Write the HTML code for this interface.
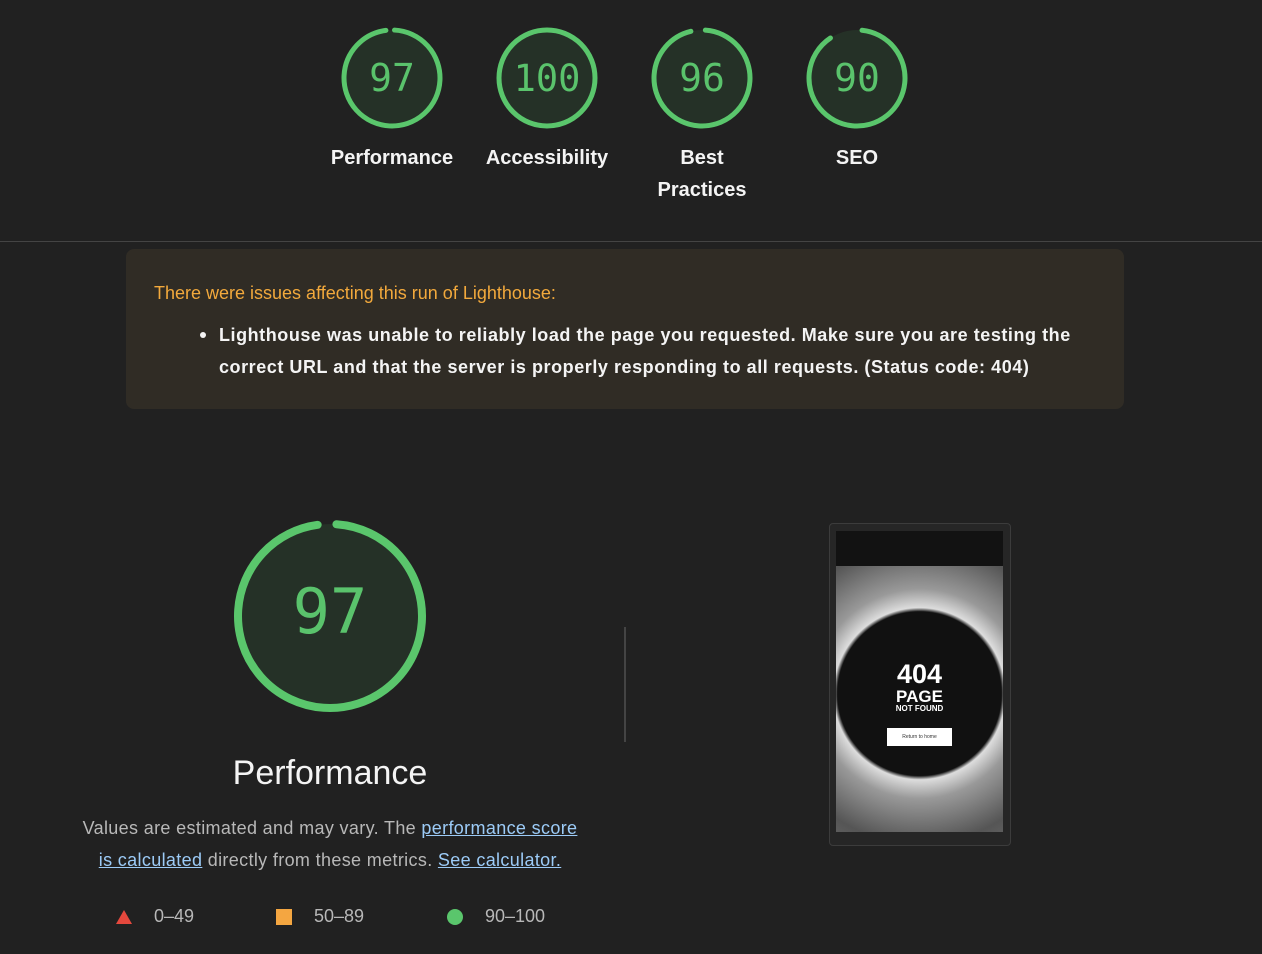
<!DOCTYPE html>
<html><head><meta charset="utf-8"><style>
body{margin:0;width:1262px;height:954px;background:#212121;font-family:"Liberation Sans",Arial,sans-serif;position:relative;overflow:hidden;color:#fff}
.g{position:absolute;width:110px;text-align:center}
.g svg{display:block;margin:0 auto}
.lbl{font-size:20px;font-weight:bold;color:#f4f4f4;line-height:32px;margin-top:12px}
.num{font-family:"DejaVu Sans Mono","Liberation Mono",monospace;fill:#5ac36c}
a{color:#9ccbf7;text-decoration:underline}
</style></head><body>

<div class="g" style="left:337px;top:26px;width:110px">
<svg width="104" height="104" viewBox="0 0 104 104"><circle cx="52" cy="52" r="48" fill="#253127"/><circle cx="52" cy="52" r="48" fill="none" stroke="#5ac66c" stroke-width="5" stroke-dasharray="292.5 301.6" transform="rotate(-87 52 52)" stroke-linecap="round"/><text x="52" y="65" text-anchor="middle" font-size="38" class="num">97</text></svg>
<div class="lbl" style="margin-left:-30px;margin-right:-30px">Performance</div></div>

<div class="g" style="left:492px;top:26px">
<svg width="104" height="104" viewBox="0 0 104 104"><circle cx="52" cy="52" r="48" fill="#253127" stroke="#5ac66c" stroke-width="5"/><text x="52" y="65" text-anchor="middle" font-size="37" class="num">100</text></svg>
<div class="lbl" style="margin-left:-30px;margin-right:-30px">Accessibility</div></div>

<div class="g" style="left:647px;top:26px">
<svg width="104" height="104" viewBox="0 0 104 104"><circle cx="52" cy="52" r="48" fill="#253127"/><circle cx="52" cy="52" r="48" fill="none" stroke="#5ac66c" stroke-width="5" stroke-dasharray="286.5 301.6" transform="rotate(-86 52 52)" stroke-linecap="round"/><text x="52" y="65" text-anchor="middle" font-size="38" class="num">96</text></svg>
<div class="lbl">Best<br>Practices</div></div>

<div class="g" style="left:802px;top:26px">
<svg width="104" height="104" viewBox="0 0 104 104"><circle cx="52" cy="52" r="48" fill="#253127"/><circle cx="52" cy="52" r="48" fill="none" stroke="#5ac66c" stroke-width="5" stroke-dasharray="268 301.6" transform="rotate(-84 52 52)" stroke-linecap="round"/><text x="52" y="65" text-anchor="middle" font-size="38" class="num">90</text></svg>
<div class="lbl">SEO</div></div>

<div style="position:absolute;left:0;right:0;top:241px;height:1px;background:#444"></div>

<div style="position:absolute;left:126px;top:249px;width:998px;height:160px;background:#302c25;border-radius:8px">
<div style="position:absolute;left:28px;top:34px;font-size:18px;color:#f2a93c">There were issues affecting this run of Lighthouse:</div>
<div style="position:absolute;left:93px;top:70px;width:880px;font-size:18px;font-weight:bold;line-height:32px;color:#f4f4f4;letter-spacing:0.55px;white-space:nowrap">Lighthouse was unable to reliably load the page you requested. Make sure you are testing the<br>correct URL and that the server is properly responding to all requests. (Status code: 404)</div>
<div style="position:absolute;left:74px;top:83px;width:6px;height:6px;border-radius:3px;background:#f4f4f4"></div>
</div>

<svg style="position:absolute;left:230px;top:516px" width="200" height="200" viewBox="0 0 200 200"><circle cx="100" cy="100" r="92" fill="#253127"/><circle cx="100" cy="100" r="92" fill="none" stroke="#5ac66c" stroke-width="8" stroke-dasharray="559 578" transform="rotate(-86 100 100)" stroke-linecap="round"/><text x="100" y="117" text-anchor="middle" font-size="62" class="num">97</text></svg>
<div style="position:absolute;left:130px;width:400px;top:754px;text-align:center;font-size:34px;color:#f4f4f4">Performance</div>
<div style="position:absolute;left:30px;width:600px;top:812px;text-align:center;font-size:18px;line-height:32px;color:#b8b8b8;letter-spacing:0.35px;white-space:nowrap">Values are estimated and may vary. The <a>performance score</a><br><a>is calculated</a> directly from these metrics. <a>See calculator.</a></div>

<div style="position:absolute;top:906px;left:116px;font-size:18px;color:#b8b8b8">
<span style="position:absolute;left:0;top:4px;width:0;height:0;border-left:8px solid transparent;border-right:8px solid transparent;border-bottom:14px solid #e5483d"></span>
<span style="position:absolute;left:38px;top:0;white-space:nowrap">0–49</span>
<span style="position:absolute;left:160px;top:3px;width:16px;height:16px;background:#f4a641"></span>
<span style="position:absolute;left:198px;top:0;white-space:nowrap">50–89</span>
<span style="position:absolute;left:331px;top:3px;width:16px;height:16px;border-radius:8px;background:#5ac66c"></span>
<span style="position:absolute;left:369px;top:0;white-space:nowrap">90–100</span>
</div>

<div style="position:absolute;left:624px;top:627px;width:2px;height:115px;background:#444"></div>

<div style="position:absolute;left:829px;top:523px;width:180px;height:321px;border:1px solid #3c3c3c;border-radius:4px;background:#262626">
<div style="position:absolute;left:6px;top:7px;width:167px;height:301px;background:#121212"></div>
<div style="position:absolute;left:6px;top:42px;width:167px;height:266px;background:radial-gradient(circle at 50% 48%,#111 0,#111 82px,#ddd 86px,#999 105px,#555 150px,#777 200px)"></div>
<div style="position:absolute;left:6px;top:137px;width:167px;text-align:center;font-weight:bold;color:#fff;line-height:1">
<div style="font-size:27px">404</div><div style="font-size:17px">PAGE</div><div style="font-size:8px">NOT FOUND</div></div>
<div style="position:absolute;left:57px;top:204px;width:65px;height:18px;background:#fff;color:#333;font-size:5px;text-align:center;line-height:18px">Return to home</div>
</div>
</body></html>
